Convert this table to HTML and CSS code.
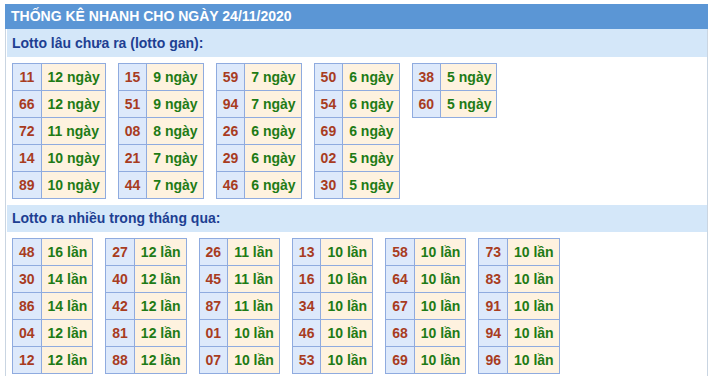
FILE: index.html
```html
<!DOCTYPE html>
<html lang="vi">
<head>
<meta charset="utf-8">
<title>Thống kê nhanh</title>
<link rel="stylesheet" href="styles.css">
</head>
<body>
<div class="panel">
  <div class="title">THỐNG KÊ NHANH CHO NGÀY 24/11/2020</div>
  <div class="body">
    <div class="sub">Lotto lâu chưa ra (lotto gan):</div>
    <div class="tables">
      <table><tr><td class="n">11</td><td class="c">12 ngày</td></tr><tr><td class="n">66</td><td class="c">12 ngày</td></tr><tr><td class="n">72</td><td class="c">11 ngày</td></tr><tr><td class="n">14</td><td class="c">10 ngày</td></tr><tr><td class="n">89</td><td class="c">10 ngày</td></tr></table>
      <table><tr><td class="n">15</td><td class="c">9 ngày</td></tr><tr><td class="n">51</td><td class="c">9 ngày</td></tr><tr><td class="n">08</td><td class="c">8 ngày</td></tr><tr><td class="n">21</td><td class="c">7 ngày</td></tr><tr><td class="n">44</td><td class="c">7 ngày</td></tr></table>
      <table><tr><td class="n">59</td><td class="c">7 ngày</td></tr><tr><td class="n">94</td><td class="c">7 ngày</td></tr><tr><td class="n">26</td><td class="c">6 ngày</td></tr><tr><td class="n">29</td><td class="c">6 ngày</td></tr><tr><td class="n">46</td><td class="c">6 ngày</td></tr></table>
      <table><tr><td class="n">50</td><td class="c">6 ngày</td></tr><tr><td class="n">54</td><td class="c">6 ngày</td></tr><tr><td class="n">69</td><td class="c">6 ngày</td></tr><tr><td class="n">02</td><td class="c">5 ngày</td></tr><tr><td class="n">30</td><td class="c">5 ngày</td></tr></table>
      <table><tr><td class="n">38</td><td class="c">5 ngày</td></tr><tr><td class="n">60</td><td class="c">5 ngày</td></tr></table>
    </div>
    <div class="sub">Lotto ra nhiều trong tháng qua:</div>
    <div class="tables">
      <table><tr><td class="n">48</td><td class="c">16 lần</td></tr><tr><td class="n">30</td><td class="c">14 lần</td></tr><tr><td class="n">86</td><td class="c">14 lần</td></tr><tr><td class="n">04</td><td class="c">12 lần</td></tr><tr><td class="n">12</td><td class="c">12 lần</td></tr></table>
      <table><tr><td class="n">27</td><td class="c">12 lần</td></tr><tr><td class="n">40</td><td class="c">12 lần</td></tr><tr><td class="n">42</td><td class="c">12 lần</td></tr><tr><td class="n">81</td><td class="c">12 lần</td></tr><tr><td class="n">88</td><td class="c">12 lần</td></tr></table>
      <table><tr><td class="n">26</td><td class="c">11 lần</td></tr><tr><td class="n">45</td><td class="c">11 lần</td></tr><tr><td class="n">87</td><td class="c">11 lần</td></tr><tr><td class="n">01</td><td class="c">10 lần</td></tr><tr><td class="n">07</td><td class="c">10 lần</td></tr></table>
      <table><tr><td class="n">13</td><td class="c">10 lần</td></tr><tr><td class="n">16</td><td class="c">10 lần</td></tr><tr><td class="n">34</td><td class="c">10 lần</td></tr><tr><td class="n">46</td><td class="c">10 lần</td></tr><tr><td class="n">53</td><td class="c">10 lần</td></tr></table>
      <table><tr><td class="n">58</td><td class="c">10 lần</td></tr><tr><td class="n">64</td><td class="c">10 lần</td></tr><tr><td class="n">67</td><td class="c">10 lần</td></tr><tr><td class="n">68</td><td class="c">10 lần</td></tr><tr><td class="n">69</td><td class="c">10 lần</td></tr></table>
      <table><tr><td class="n">73</td><td class="c">10 lần</td></tr><tr><td class="n">83</td><td class="c">10 lần</td></tr><tr><td class="n">91</td><td class="c">10 lần</td></tr><tr><td class="n">94</td><td class="c">10 lần</td></tr><tr><td class="n">96</td><td class="c">10 lần</td></tr></table>
    </div>
  </div>
</div>
</body>
</html>
```

FILE: styles.css
```css
html, body {
  margin: 0;
  padding: 0;
  background: #ffffff;
}
body {
  padding: 4px 5px 0 5px;
  font-family: "Liberation Sans", Arial, sans-serif;
}
.panel {
  width: 703px;
}
.title {
  background: #5b96d5;
  color: #ffffff;
  font-weight: bold;
  font-size: 14px;
  height: 25px;
  line-height: 25px;
  padding-left: 6px;
}
.body {
  border-left: 1px solid #c9d5e2;
  border-right: 1px solid #c9d5e2;
  padding-left: 1px;
  padding-bottom: 6px;
}
.sub {
  background: #d4e7f9;
  color: #1e3f92;
  font-weight: bold;
  font-size: 14px;
  height: 28px;
  line-height: 28px;
  padding-left: 5px;
}
.sub + .tables + .sub {
  height: 27px;
  line-height: 27px;
}
.tables {
  display: flex;
  align-items: flex-start;
  gap: 12px;
  padding: 6px 5px;
}
table {
  border-collapse: collapse;
  font-size: 14px;
  font-weight: bold;
}
td {
  border: 1px solid #8fabdf;
  height: 27px;
  padding: 0 6px;
  box-sizing: border-box;
  white-space: nowrap;
  line-height: 16px;
}
td.n {
  background: #dde9fb;
  color: #a83c1f;
  text-align: center;
}
td.c {
  background: #fef2df;
  color: #1e7b16;
  padding: 0 5px 0 6px;
}
```
